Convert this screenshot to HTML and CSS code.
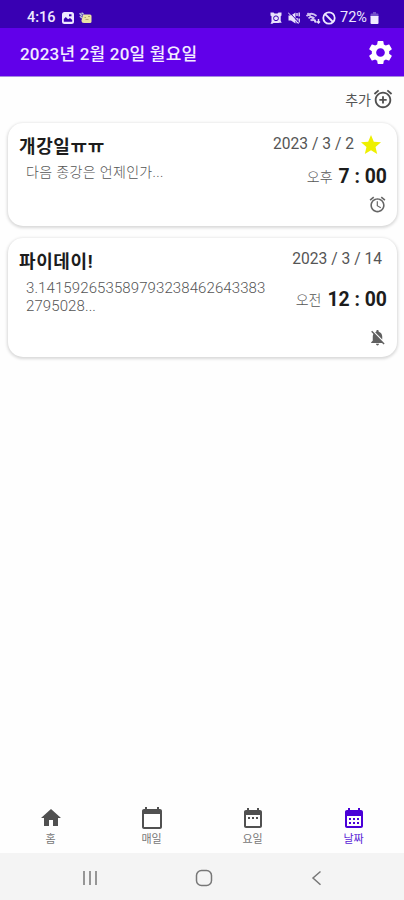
FILE: index.html
```html
<!DOCTYPE html>
<html lang="ko">
<head>
<meta charset="utf-8">
<title>알람</title>
<link rel="stylesheet" href="styles.css">
</head>
<body>
<div class="screen">
  <div class="status">
    <span class="clock">4:16</span>
    <svg class="s-img" viewBox="0 0 12 12"><rect width="12" height="12" rx="2.500" fill="#eee8ff"/><path d="M1.800 9.800V7l2-2 2.300 2.300L8 6l2.200 2v1.800z" fill="#3900b3"/><rect x="7" y="2.300" width="2.500" height="2" fill="#3900b3"/></svg>
    <svg class="s-note" viewBox="0 0 13 12"><path d="M4 2.500h7q1.500 0 1.500 1.500v5.500q0 1.500-1.500 1.500H5q-2.500 0-2.500-2.500z" fill="#e9e3a4"/><path d="M.6 1.200 3 4M.8 4.300 3 6M2.500 1l2 1" stroke="#b9c8d8" stroke-width="1.400"/><path d="M5.500 5.500h1.500m2-1h2M6.500 7.500h3" stroke="#b5a96f"/></svg>
    <span class="spacer"></span>
    <svg class="s-alarm" viewBox="0 0 12 12"><path d="M.5.500h3l1 1h3l1-1h3v3l-.8.800v4.500l1 2H9.500L8.500 11h-5l-1 .800H.5l1-2V4.300L.5 3.500z" fill="#e9e2fb"/><circle cx="6" cy="6.300" r="2.400" fill="none" stroke="#3900b3"/></svg>
    <svg class="s-mute" viewBox="0 0 12 12"><path d="M.5 3.500H3l4.500-3v11l-4.500-3H.5z" fill="#e9e2fb"/><path d="M9 1v3M9 6v3M11.200.500v4M11.200 6.500v4.500M8.500 10.500h2" stroke="#e9e2fb" stroke-width="1.400"/><path d="M1 0l10.500 11" stroke="#3900b3"/><path d="M0 .500l10.500 11" stroke="#e9e2fb"/></svg>
    <svg class="s-wifi" viewBox="0 0 15 12"><path d="M.5 4q5-4.500 10 0M2.500 6.300q3-2.800 6 0M1.500 1l9 9.500M4.500 8.500q1.300-1 2.500 0" fill="none" stroke="#cfc0f2" stroke-width="1.700"/><path d="M9 7.500v3M12.500 7v4m-1.500-1.500 1.500 1.500L14 9.500" fill="none" stroke="#e9e2fb" stroke-width="1.400"/></svg>
    <svg class="s-block" viewBox="0 0 14 14"><circle cx="7" cy="7" r="5.700" fill="none" stroke="#eee8ff" stroke-width="1.800"/><path d="M3 3l8 8" stroke="#eee8ff" stroke-width="1.800"/></svg>
    <span class="percent">72%</span>
    <svg class="s-batt" viewBox="0 0 9 12"><path d="M3 0h3v1.500h1.500q1 0 1 1V5h-8V2.500q0-1 1-1H3z" fill="#7450cb"/><path d="M.5 4h8v7q0 1-1 1h-6q-1 0-1-1z" fill="#f0ebff"/></svg>
  </div>

  <header class="appbar">
    <h1>2023년 2월 20일 월요일</h1>
    <svg class="gear" viewBox="0 0 24 24"><path fill="#fff" d="M19.140 12.940c.04-.3.060-.61.060-.94 0-.32-.02-.64-.07-.94l2.030-1.580c.18-.14.230-.41.120-.61l-1.920-3.320c-.12-.22-.37-.29-.59-.22l-2.390.96c-.5-.38-1.030-.7-1.620-.94l-.36-2.540c-.04-.24-.24-.41-.48-.41h-3.840c-.24 0-.43.170-.47.410l-.36 2.540c-.59.240-1.130.570-1.620.940l-2.390-.96c-.22-.08-.47 0-.59.220L2.740 8.870c-.12.210-.08.470.120.610l2.030 1.580c-.05.300-.09.630-.09.940s.02.640.070.940l-2.030 1.580c-.18.140-.23.410-.12.610l1.920 3.320c.12.220.370.290.590.220l2.390-.96c.5.380 1.030.700 1.620.940l.36 2.540c.05.240.240.410.480.410h3.840c.24 0 .44-.17.470-.41l.36-2.540c.59-.24 1.130-.56 1.620-.94l2.390.96c.22.080.470 0 .59-.22l1.920-3.320c.12-.22.070-.47-.12-.61l-2.010-1.580zM12 15.600c-1.980 0-3.600-1.620-3.600-3.600s1.620-3.600 3.600-3.600 3.600 1.620 3.600 3.600-1.620 3.600-3.600 3.600z"/></svg>
  </header>

  <main>
    <div class="add">
      <span>추가</span>
      <svg viewBox="0 0 24 24"><path fill="#505050" d="M7.880 3.390L6.600 1.860 2 5.710l1.290 1.530 4.590-3.850zM22 5.720l-4.600-3.860-1.290 1.530 4.600 3.860L22 5.720zM12 4c-4.970 0-9 4.030-9 9s4.020 9 9 9c4.970 0 9-4.030 9-9s-4.030-9-9-9zm0 16c-3.870 0-7-3.130-7-7s3.130-7 7-7 7 3.130 7 7-3.130 7-7 7zm1-11h-2v3H8v2h3v3h2v-3h3v-2h-3V9z"/></svg>
    </div>

    <article class="card first">
      <div class="info">
        <h2>개강일ㅠㅠ</h2>
        <p class="memo">다음 종강은 언제인가...</p>
      </div>
      <div class="when">
        <div class="date"><span>2023 / 3 / 2</span><svg class="star" viewBox="2 2 20 19"><path fill="#eef000" d="M12 17.270L18.180 21l-1.640-7.030L22 9.240l-7.190-.61L12 2 9.190 8.630 2 9.240l5.460 4.730L5.820 21z"/></svg></div>
        <div class="time"><small>오후</small><b>7 : 00</b></div>
        <svg class="bell" viewBox="0 0 24 24"><path fill="#666" d="M22 5.720l-4.600-3.860-1.290 1.530 4.600 3.860L22 5.720zM7.880 3.390L6.600 1.860 2 5.710l1.290 1.530 4.590-3.850zM12.500 8H11v6l4.750 2.850.75-1.230-4-2.370V8zM12 4c-4.970 0-9 4.030-9 9s4.020 9 9 9c4.970 0 9-4.030 9-9s-4.030-9-9-9zm0 16c-3.870 0-7-3.130-7-7s3.130-7 7-7 7 3.130 7 7-3.130 7-7 7z"/></svg>
      </div>
    </article>

    <article class="card second">
      <div class="info">
        <h2>파이데이!</h2>
        <p class="memo digits">3.141592653589793238462643383<br>2795028...</p>
      </div>
      <div class="when">
        <div class="date"><span>2023 / 3 / 14</span></div>
        <div class="time"><small>오전</small><b>12 : 00</b></div>
        <svg class="bell" viewBox="0 0 24 24"><path fill="#606060" d="M20 18.690L7.840 6.140 5.270 3.490 4 4.760l2.800 2.800v.01c-.52.990-.8 2.160-.8 3.420v5l-2 2v1h13.730l2 2L21 19.720l-1-1.030zM12 22c1.110 0 2-.89 2-2h-4c0 1.110.890 2 2 2zm6-7.320V11c0-3.080-1.640-5.640-4.500-6.320V4c0-.83-.67-1.500-1.500-1.500s-1.500.670-1.500 1.500v.68c-.15.030-.29.080-.42.120-.1.030-.2.070-.3.110h-.01c-.01 0-.01 0-.02.010-.23.090-.46.200-.68.310 0 0-.01 0-.01.010L18 14.680z"/></svg>
      </div>
    </article>
  </main>

  <nav class="tabs">
    <div class="tab"><svg viewBox="0 0 24 24"><path fill="#505050" d="M10 20v-6h4v6h5v-8h3L12 3 2 12h3v8z"/></svg><span>홈</span></div>
    <div class="tab"><svg viewBox="0 0 24 24"><path fill="#505050" d="M20 3h-1V1h-2v2H7V1H5v2H4c-1.100 0-2 .9-2 2v16c0 1.100.900 2 2 2h16c1.100 0 2-.9 2-2V5c0-1.100-.9-2-2-2zm0 18H4V8h16v13z"/></svg><span>매일</span></div>
    <div class="tab"><svg viewBox="0 0 24 24"><path fill="#505050" d="M9 11H7v2h2v-2zm4 0h-2v2h2v-2zm4 0h-2v2h2v-2zm2-7h-1V2h-2v2H8V2H6v2H5c-1.110 0-2 .9-2 2v14c0 1.100.890 2 2 2h14c1.100 0 2-.9 2-2V6c0-1.100-.9-2-2-2zm0 16H5V9h14v11z"/></svg><span>요일</span></div>
    <div class="tab active"><svg viewBox="0 0 24 24"><path fill="#4a00d8" d="M19 4h-1V2h-2v2H8V2H6v2H5c-1.110 0-2 .9-2 2v14c0 1.100.890 2 2 2h14c1.100 0 2-.9 2-2V6c0-1.100-.9-2-2-2zm0 16H5V10h14v10zM9 14H7v-2h2v2zm4 0h-2v-2h2v2zm4 0h-2v-2h2v2zm-8 4H7v-2h2v2zm4 0h-2v-2h2v2zm4 0h-2v-2h2v2z"/></svg><span>날짜</span></div>
  </nav>

  <div class="system">
    <svg viewBox="0 0 18 18"><path d="M3 2v14M9 2v14M15 2v14" stroke="#777" stroke-width="1.500"/></svg>
    <svg viewBox="0 0 18 18"><rect x="1.500" y="1.500" width="15" height="15" rx="5" fill="none" stroke="#777" stroke-width="1.500"/></svg>
    <svg viewBox="0 0 18 18"><path d="M12.500 2.500 5 9l7.500 6.800" fill="none" stroke="#777" stroke-width="1.500"/></svg>
  </div>
</div>
</body>
</html>
```
FILE: styles.css
```css
* { box-sizing: border-box; }
body {
  margin: 0;
  background: #fefefe;
  font-family: Roboto, "Noto Sans CJK KR", sans-serif;
  color: #555;
}
svg { display: block; flex: none; }
h1, h2, p { margin: 0; }
.screen { width: 404px; height: 900px; display: flex; flex-direction: column; }

.status {
  height: 28px;
  background: #3900b3;
  color: #eee8ff;
  display: flex;
  align-items: center;
  padding: 7px 25px 0 27px;
  font-size: 14.5px;
  line-height: 20px;
  font-weight: 500;
}
.clock { width: 35px; }
.spacer { flex: 1; }
.s-img { width: 12px; height: 12px; }
.s-note { width: 13px; height: 12px; margin-left: 5px; }
.s-alarm { width: 12px; height: 12px; }
.s-mute { width: 12px; height: 12px; margin-left: 6px; }
.s-wifi { width: 15px; height: 12px; margin-left: 6px; }
.s-block { width: 14px; height: 14px; margin-left: 1px; }
.percent { width: 28px; margin-left: 4px; font-weight: 400; }
.s-batt { width: 9px; height: 12px; margin-left: 2px; }

.appbar {
  height: 49px;
  background: #6100ea;
  border-bottom: 1px solid #a58be0;
  display: flex;
  align-items: center;
  justify-content: space-between;
  padding: 3px 9px 0 20px;
}
.appbar h1 { font-size: 17px; line-height: 24px; font-weight: 500; letter-spacing: 0.2px; color: #f2ecff; white-space: nowrap; }
.gear { width: 29px; height: 29px; margin-bottom: 2px; }

main { flex: 1; padding: 0 7px 0 8px; }
.add {
  height: 46px;
  display: flex;
  align-items: center;
  justify-content: flex-end;
  padding: 0 3px 2px 0;
  font-size: 14px;
}
.add svg { width: 22px; height: 22px; }
.add span { margin-right: 1px; }

.card {
  display: flex;
  justify-content: space-between;
  background: #fff;
  border-radius: 15px;
  box-shadow: 0 1px 3px 1px rgba(0, 0, 0, 0.15);
  padding-left: 11px;
  padding-right: 10px;
}
.first { height: 103px; }
.second { height: 119px; margin-top: 12px; }
.info { padding-top: 11px; }
.card h2 { font-size: 18px; line-height: 26px; font-weight: 700; letter-spacing: 0.6px; color: #1c1c1c; }
.memo { padding-left: 7px; font-size: 14px; line-height: 18px; margin-top: 3px; font-weight: 300; letter-spacing: 0.35px; white-space: nowrap; }
.digits { font-size: 15px; margin-top: 4px; letter-spacing: 0.1px; }
.when { display: flex; flex-direction: column; align-items: flex-end; }
.date { display: flex; align-items: center; height: 22px; margin-top: 10px; font-size: 15.6px; padding-right: 6px; white-space: nowrap; }
.star { width: 20px; height: 19px; margin-left: 7px; }
.second .date { padding-right: 5px; }
.time { display: flex; align-items: center; height: 24px; margin-top: 9px; }
.time small { font-size: 14px; font-weight: 300; margin-right: 6px; }
.time b { font-size: 19.4px; font-weight: 700; color: #1c1c1c; }
.bell { width: 19px; height: 19px; margin-top: 7px; }
.second .time { margin-top: 17px; }
.second .bell { margin-top: 17px; }

.tabs { height: 53px; display: flex; padding-top: 6px; }
.tab { flex: 1; display: flex; flex-direction: column; align-items: center; font-size: 11px; line-height: 16px; color: #777; }
.tab svg { width: 24px; height: 24px; }
.tab span { margin-top: 2px; }
.active { color: #5a1fd6; }

.system { height: 47px; background: #f4f4f4; display: flex; align-items: center; padding: 3px 78px 0 81px; justify-content: space-between; }
.system svg { width: 18px; height: 18px; }
```
